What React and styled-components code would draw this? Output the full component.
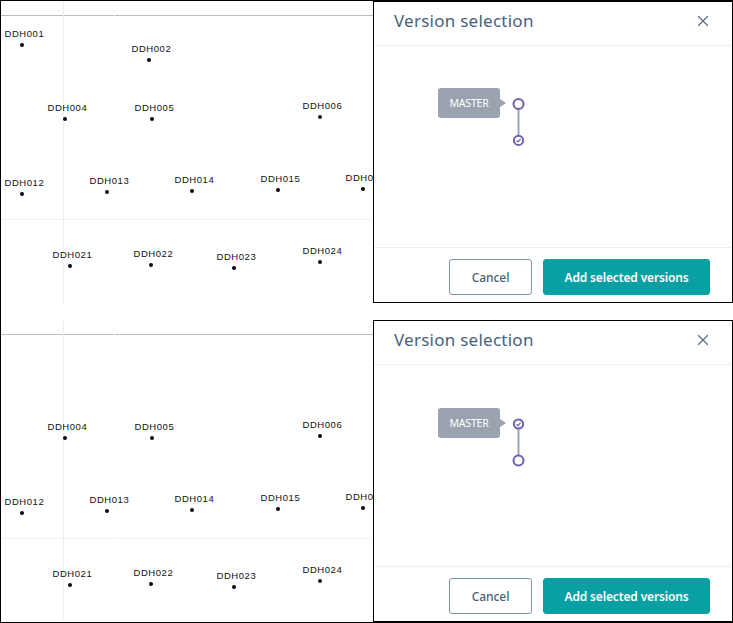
import React from "react";
import styled, { createGlobalStyle } from "styled-components";
import { X } from "lucide-react";

const GlobalStyle = createGlobalStyle`
    html, body {
        margin: 0;
        padding: 0;
        background: #fff;
    }
`;

const upperPins = [
    { name: "DDH001", x: 20, y: 44 },
    { name: "DDH002", x: 147, y: 59 },
];

const sharedPins = [
    { name: "DDH004", x: 63, y: 118 },
    { name: "DDH005", x: 150, y: 118 },
    { name: "DDH006", x: 318, y: 116 },
    { name: "DDH012", x: 20, y: 193 },
    { name: "DDH013", x: 105, y: 191 },
    { name: "DDH014", x: 190, y: 190 },
    { name: "DDH015", x: 276, y: 189 },
    { name: "DDH0", x: 361, y: 188 },
    { name: "DDH021", x: 68, y: 265 },
    { name: "DDH022", x: 149, y: 264 },
    { name: "DDH023", x: 232, y: 267 },
    { name: "DDH024", x: 318, y: 261 },
];

const Page = styled.div`
    width: 733px;
    height: 623px;
    box-sizing: border-box;
    border-top: 1px solid #000;
    border-bottom: 1px solid #000;
    border-left: 1px solid #000;
    overflow: hidden;
    display: flex;
    flex-direction: column;
`;

const Row = styled.div`
    display: grid;
    grid-template-columns: 372px 360px;
    height: 319px;
    flex: none;
`;

const Canvas = styled.div`
    position: relative;
    height: 303px;
    overflow: hidden;
    background: #fff;
`;

const HLine = styled.div`
    position: absolute;
    left: 0;
    right: 0;
    top: ${(p) => p.$y}px;
    height: 1px;
    background: ${(p) => p.$color};
`;

const VLine = styled.div`
    position: absolute;
    top: 0;
    bottom: 0;
    left: ${(p) => p.$x}px;
    width: 1px;
    background: ${(p) => p.$color};
`;

const Pin = styled.div`
    position: absolute;
    width: 4px;
    height: 4px;
    margin: -2px 0 0 -2px;
    border-radius: 50%;
    background: #050518;
`;

const PinLabel = styled.span`
    position: absolute;
    left: -15px;
    top: -15px;
    font: 9.5px/12px "Liberation Sans", Arial, sans-serif;
    letter-spacing: 0.55px;
    color: #111;
    white-space: nowrap;
`;

const Dialog = styled.section`
    height: 302px;
    box-sizing: border-box;
    border: 1px solid #000;
    background: #fff;
    display: flex;
    flex-direction: column;
    font-family: "Noto Sans", "Open Sans", sans-serif;
`;

const Header = styled.header`
    height: 44px;
    flex: none;
    box-sizing: border-box;
    padding: 0 20px 6px;
    border-bottom: 1px solid #eceef0;
    display: flex;
    align-items: center;
    justify-content: space-between;
`;

const Title = styled.h2`
    margin: 0;
    font-size: 17px;
    font-weight: 400;
    letter-spacing: 0.25px;
    color: #4a6079;
`;

const CloseButton = styled.button`
    border: 0;
    padding: 0;
    background: none;
    color: #5a6f87;
    display: flex;
`;

const Body = styled.div`
    flex: 1;
    padding: ${(p) => p.$top}px 0 0 64px;
    display: flex;
    align-items: flex-start;
    gap: 5px;
`;

const Tag = styled.div`
    position: relative;
    width: 62px;
    height: 30px;
    border-radius: 3px;
    background: #9aa3af;
    color: #fff;
    font-size: 10.5px;
    letter-spacing: -0.2px;
    display: flex;
    align-items: center;
    justify-content: center;

    &::after {
        content: "";
        position: absolute;
        left: 100%;
        top: 11px;
        border-left: 6px solid #9aa3af;
        border-top: 4px solid transparent;
        border-bottom: 4px solid transparent;
    }
`;

const Graph = styled.svg`
    margin: 9px 0 0 6px;
    display: block;
`;

const Footer = styled.footer`
    height: 55px;
    flex: none;
    box-sizing: border-box;
    padding: 11px 22px 0 0;
    border-top: 1px solid #eceef0;
    display: flex;
    justify-content: flex-end;
    gap: 11px;
`;

const Button = styled.button`
    height: 36px;
    width: ${(p) => (p.$primary ? "167px" : "83px")};
    box-sizing: border-box;
    border-radius: 3px;
    border: 1px solid ${(p) => (p.$primary ? "#08a0a3" : "#7d97a8")};
    background: ${(p) => (p.$primary ? "#08a0a3" : "#fff")};
    color: ${(p) => (p.$primary ? "#fff" : "#4a6079")};
    font-family: inherit;
    font-size: 12px;
    font-weight: ${(p) => (p.$primary ? 600 : 500)};
    letter-spacing: ${(p) => (p.$primary ? "-0.15px" : "-0.05px")};
    padding: 0;
`;

const Node = ({ cy, checked }) => (
    <g>
        <circle cx="7.5" cy={cy} r={checked ? 4.6 : 5} fill="#fff" stroke="#6a62ad" strokeWidth="2" />
        {checked && (
            <path
                d={`M5.4 ${cy + 0.3} L6.9 ${cy + 1.6} L9.6 ${cy - 1.4}`}
                fill="none"
                stroke="#6a62ad"
                strokeWidth="1.2"
            />
        )}
    </g>
);

const VersionGraph = ({ checkedIndex }) => (
    <Graph width="15" height="50" viewBox="0 0 15 50">
        <line x1="7.5" y1="7" x2="7.5" y2="43" stroke="#9aa5b6" strokeWidth="2" />
        <Node cy={7} checked={checkedIndex === 0} />
        <Node cy={43.4} checked={checkedIndex === 1} />
    </Graph>
);

const Map = ({ pins }) => (
    <Canvas>
        <HLine $y={14} $color="#bdbdbd" />
        <HLine $y={65} $color="#fdfdfd" />
        <HLine $y={218} $color="#f1f1f1" />
        <VLine $x={62} $color="#efefef" />
        <VLine $x={113} $color="#fdfdfd" />
        {pins.map((pin) => (
            <Pin key={pin.name} style={{ left: pin.x + 0.5, top: pin.y }}>
                <PinLabel>{pin.name}</PinLabel>
            </Pin>
        ))}
    </Canvas>
);

const VersionDialog = ({ checkedIndex, bodyTop }) => (
    <Dialog>
        <Header>
            <Title>Version selection</Title>
            <CloseButton aria-label="Close">
                <X size={18} strokeWidth={1.6} />
            </CloseButton>
        </Header>
        <Body $top={bodyTop}>
            <Tag>MASTER</Tag>
            <VersionGraph checkedIndex={checkedIndex} />
        </Body>
        <Footer>
            <Button>Cancel</Button>
            <Button $primary>Add selected versions</Button>
        </Footer>
    </Dialog>
);

export default function App() {
    return (
        <>
            <GlobalStyle />
            <Page>
                <Row>
                    <Map pins={[...upperPins, ...sharedPins]} />
                    <VersionDialog checkedIndex={1} bodyTop={42} />
                </Row>
                <Row>
                    <Map pins={sharedPins} />
                    <VersionDialog checkedIndex={0} bodyTop={43} />
                </Row>
            </Page>
        </>
    );
}
